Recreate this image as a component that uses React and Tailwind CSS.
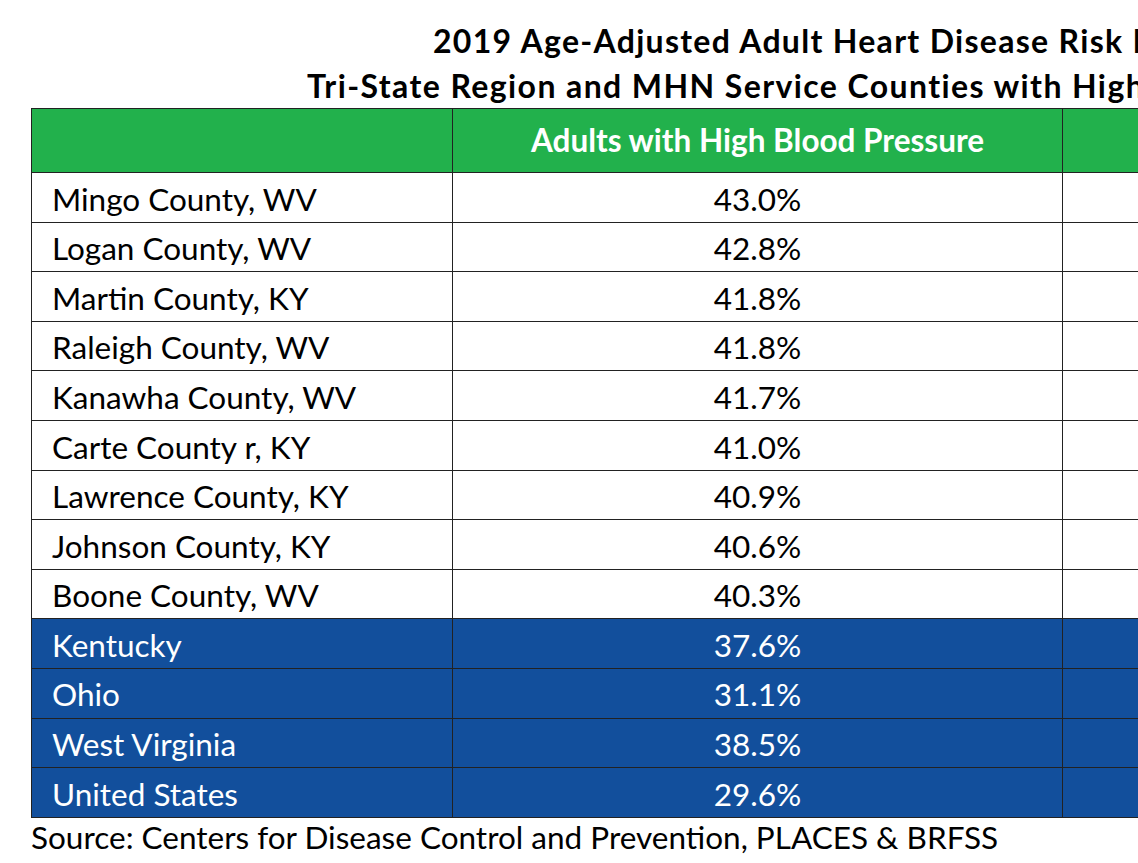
const rows = [
  { name: "Mingo County, WV", bp: "43.0%" },
  { name: "Logan County, WV", bp: "42.8%" },
  { name: "Martin County, KY", bp: "41.8%" },
  { name: "Raleigh County, WV", bp: "41.8%" },
  { name: "Kanawha County, WV", bp: "41.7%" },
  { name: "Carte County r, KY", bp: "41.0%" },
  { name: "Lawrence County, KY", bp: "40.9%" },
  { name: "Johnson County, KY", bp: "40.6%" },
  { name: "Boone County, WV", bp: "40.3%" },
]

const states = [
  { name: "Kentucky", bp: "37.6%" },
  { name: "Ohio", bp: "31.1%" },
  { name: "West Virginia", bp: "38.5%" },
  { name: "United States", bp: "29.6%" },
]

function Row({ name, bp, dark }) {
  const cell = dark ? "bg-[#124f9c] text-white" : "bg-white text-black"
  return (
    <div className="grid grid-cols-[421px_610px_400px] h-[49.6px] border-b-[1.5px] border-[#222]">
      <div className={`${cell} pl-[20px] pt-[4px] flex items-center border-r-[1.5px] border-[#222]`}>{name}</div>
      <div className={`${cell} pt-[4px] flex items-center justify-center border-r-[1.5px] border-[#222]`}>{bp}</div>
      <div className={cell}></div>
    </div>
  )
}

export default function App() {
  return (
    <div className="w-[1138px] h-[863px] overflow-hidden bg-white font-['Lato',sans-serif] text-[31.5px] leading-none whitespace-nowrap">
      <div className="w-[1500px] pl-[31px]">
        <div className="pt-[18px] font-bold text-black text-[32px]">
          <p className="pl-[402px] h-[45px] flex items-center tracking-[1.3px]">2019 Age-Adjusted Adult Heart Disease Risk Factors</p>
          <p className="pl-[276px] h-[45px] flex items-center tracking-[1.4px]">Tri-State Region and MHN Service Counties with Highest Rates</p>
        </div>
        <div className="border-t-[1.5px] border-l-[1.5px] border-[#222]">
          <div className="grid grid-cols-[421px_610px_400px] h-[64px] bg-[#22b14c] border-b-[1.5px] border-[#222] text-white font-bold">
            <div className="border-r-[1.5px] border-[#222]"></div>
            <div className="flex items-center justify-center border-r-[1.5px] border-[#222]">Adults with High Blood Pressure</div>
            <div></div>
          </div>
          {rows.map((r) => (
            <Row key={r.name} name={r.name} bp={r.bp} />
          ))}
          {states.map((r) => (
            <Row key={r.name} name={r.name} bp={r.bp} dark />
          ))}
        </div>
        <p className="h-[40px] flex items-center">Source: Centers for Disease Control and Prevention, PLACES &amp; BRFSS</p>
      </div>
    </div>
  )
}
